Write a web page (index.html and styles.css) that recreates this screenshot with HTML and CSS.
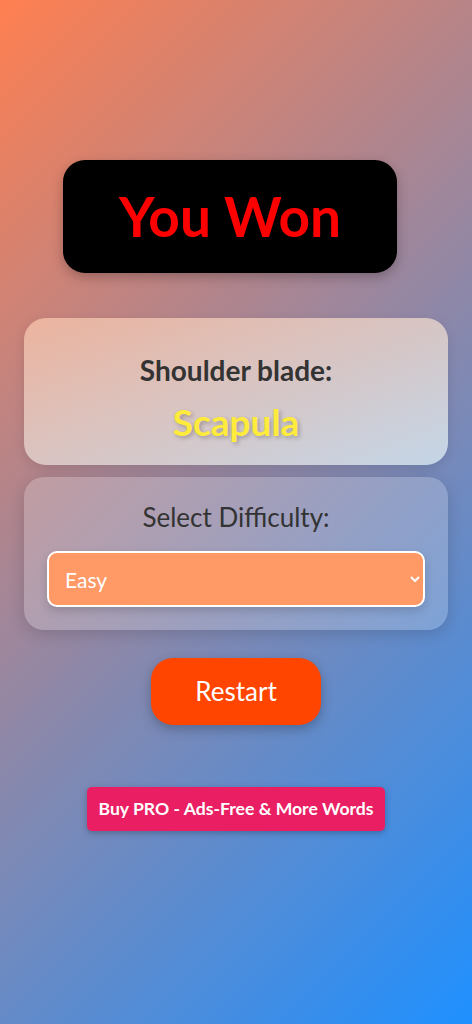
FILE: index.html
```html
<!DOCTYPE html>
<html lang="en">
<head>
    <meta charset="UTF-8">
    <meta name="viewport" content="width=device-width, initial-scale=1.0">
    <title>Anatomy Words</title>
    <link rel="stylesheet" href="styles.css">
</head>
<body>

    <div class="game">
        <div class="result">
            <h1>You Won</h1>
        </div>

        <div class="word-card">
            <h2 class="hint">Shoulder blade:</h2>
            <div class="answer">Scapula</div>
        </div>

        <div class="difficulty-card">
            <label for="difficulty">Select Difficulty:</label>
            <select id="difficulty">
                <option>Easy</option>
                <option>Medium</option>
                <option>Hard</option>
            </select>
        </div>

        <button type="button" class="restart-btn">Restart</button>

        <button type="button" class="pro-btn">Buy PRO - Ads-Free &amp; More Words</button>
    </div>

</body>
</html>
```

FILE: styles.css
```css
body {
    font-family: Lato, 'Noto Sans', sans-serif;
    background: linear-gradient(135deg, #ff7f50, #1e90ff);
    margin: 0;
    padding: 0;
    min-height: 100vh;
}
.game {
    display: flex;
    flex-direction: column;
    align-items: center;
    padding: 160px 24px 40px;
}
.result {
    background: #000;
    border-radius: 22px;
    padding: 24px 56px;
    margin-right: 12px;
    box-shadow: 0 4px 12px rgba(0, 0, 0, 0.25);
}
.result h1 {
    margin: 0;
    color: #ff0000;
    font-size: 55px;
    line-height: 65px;
    font-weight: 700;
}
.word-card {
    width: 100%;
    box-sizing: border-box;
    margin-top: 45px;
    padding: 34px 20px 21px;
    border-radius: 22px;
    background: linear-gradient(160deg, rgba(238, 182, 160, 0.95), rgba(200, 218, 234, 0.95));
    box-shadow: 0 4px 12px rgba(0, 0, 0, 0.1);
    text-align: center;
}
.hint {
    margin: 0;
    color: #333;
    font-size: 28px;
    line-height: 36px;
    font-weight: 700;
}
.answer {
    margin-top: 12px;
    color: #ffeb3b;
    font-size: 37px;
    line-height: 44px;
    font-weight: 700;
    text-shadow: 2px 2px 4px rgba(0, 0, 0, 0.25);
}
.difficulty-card {
    width: 100%;
    box-sizing: border-box;
    margin-top: 12px;
    padding: 23px;
    border-radius: 20px;
    background: rgba(255, 255, 255, 0.2);
    box-shadow: 0 4px 16px rgba(0, 0, 0, 0.15);
    text-align: center;
}
.difficulty-card label {
    display: block;
    color: #333;
    font-size: 26px;
    line-height: 34px;
}
.difficulty-card select {
    display: block;
    width: 100%;
    height: 56px;
    margin-top: 17px;
    padding: 0 12px;
    font-family: inherit;
    font-size: 21px;
    color: #fff;
    background-color: #ff9966;
    border: 2px solid #fff;
    border-radius: 10px;
    box-shadow: 0 4px 10px rgba(0, 0, 0, 0.15);
}
.restart-btn {
    margin-top: 28px;
    padding: 18px 44px;
    font-family: inherit;
    font-size: 26px;
    line-height: 31px;
    color: #fff;
    background-color: #ff4500;
    border: none;
    border-radius: 22px;
    cursor: pointer;
    box-shadow: 0 4px 12px rgba(0, 0, 0, 0.25);
}
.pro-btn {
    margin-top: 62px;
    padding: 11px 11px;
    font-family: inherit;
    font-size: 17.6px;
    font-weight: 700;
    line-height: 22px;
    color: #fff;
    background-color: #e91e63;
    border: none;
    border-radius: 5px;
    cursor: pointer;
    box-shadow: 0 2px 6px rgba(0, 0, 0, 0.25);
}
```
